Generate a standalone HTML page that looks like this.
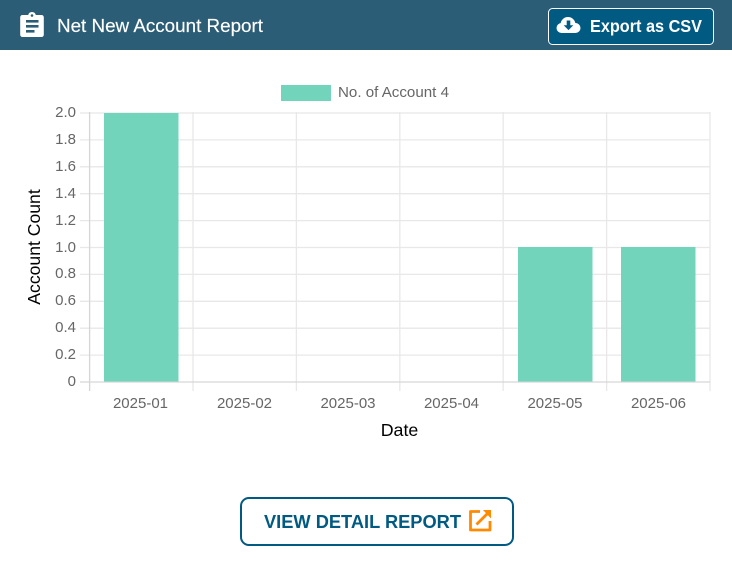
<!DOCTYPE html>
<html>
<head>
<meta charset="utf-8">
<style>
html,body{margin:0;padding:0;width:732px;height:563px;overflow:hidden;background:#fff}
svg{display:block;position:absolute;left:0;top:0}
text{font-family:"Liberation Sans",sans-serif}
</style>
</head>
<body>
<svg width="732" height="563" viewBox="0 0 732 563" xmlns="http://www.w3.org/2000/svg">
<rect x="0" y="0" width="732" height="50" fill="#2b5d76"/>
<!-- clipboard icon -->
<path d="M22.500 15h5.700a3.900 3.900 0 0 1 7.600 0h5.700a2.300 2.300 0 0 1 2.300 2.300v17.400a2.300 2.300 0 0 1-2.300 2.300H22.500a2.300 2.300 0 0 1-2.300-2.300V17.300a2.300 2.300 0 0 1 2.300-2.300z" fill="#fff"/>
<circle cx="32" cy="15.500" r="1.300" fill="#2b5d76"/>
<rect x="26" y="20" width="12.500" height="2.600" fill="#2b5d76"/>
<rect x="26" y="25" width="12.500" height="2.600" fill="#2b5d76"/>
<rect x="26" y="30" width="8.500" height="2.600" fill="#2b5d76"/>
<text x="57" y="32" font-size="18.200" fill="#fff" stroke="#fff" stroke-width="0.15" textLength="206" lengthAdjust="spacingAndGlyphs">Net New Account Report</text>
<!-- export button -->
<rect x="548.500" y="8.500" width="165" height="36" rx="4" fill="#005a82" stroke="#fff" stroke-width="1"/>
<g fill="#fff">
<circle cx="568" cy="24.500" r="7.500"/>
<circle cx="561.500" cy="28" r="5"/>
<circle cx="575.500" cy="28" r="5"/>
<rect x="561.500" y="25" width="14" height="8"/>
</g>
<path d="M566.700 20.500h3.600v4.700h3l-4.800 4.900-4.800-4.900h3z" fill="#005a82"/>
<text x="590" y="32" font-size="17.500" font-weight="700" fill="#fff" textLength="112" lengthAdjust="spacingAndGlyphs">Export as CSV</text>
<!-- legend -->
<rect x="281" y="85" width="50" height="16" fill="#72d4bb"/>
<text x="338" y="97" font-size="14.300" fill="#666" textLength="111" lengthAdjust="spacingAndGlyphs">No. of Account 4</text>
<!-- grid -->
<g stroke="#e8e8e8" stroke-width="1.300" fill="none">
<path d="M80 113H710M80 139.900H710M80 166.800H710M80 193.700H710M80 220.600H710M80 247.500H710M80 274.400H710M80 301.300H710M80 328.200H710M80 355.100H710"/>
<path d="M193 112V391M296.400 112V391M399.800 112V391M503.200 112V391M606.600 112V391M710 112V391"/>
</g>
<path d="M80 382H710M89.600 112V391" stroke="#d6d6d6" stroke-width="1.300" fill="none"/>
<!-- bars -->
<rect x="104" y="113" width="74.500" height="268.500" fill="#72d4bb"/>
<rect x="518" y="247" width="74.500" height="134.500" fill="#72d4bb"/>
<rect x="621" y="247" width="74.500" height="134.500" fill="#72d4bb"/>
<!-- y labels -->
<g font-size="15" fill="#666" text-anchor="end">
<text x="76" y="117">2.0</text>
<text x="76" y="144">1.8</text>
<text x="76" y="171">1.6</text>
<text x="76" y="198">1.4</text>
<text x="76" y="225">1.2</text>
<text x="76" y="252">1.0</text>
<text x="76" y="278">0.8</text>
<text x="76" y="305">0.6</text>
<text x="76" y="332">0.4</text>
<text x="76" y="359">0.2</text>
<text x="76" y="386">0</text>
</g>
<!-- x labels -->
<g font-size="15" fill="#666" text-anchor="middle">
<text x="140.500" y="408">2025-01</text>
<text x="244.500" y="408">2025-02</text>
<text x="348" y="408">2025-03</text>
<text x="451.500" y="408">2025-04</text>
<text x="555" y="408">2025-05</text>
<text x="658.500" y="408">2025-06</text>
</g>
<text x="399.500" y="436" font-size="17.800" fill="#000" text-anchor="middle">Date</text>
<text transform="translate(40 247) rotate(-90)" font-size="17.600" fill="#000" text-anchor="middle">Account Count</text>
<!-- bottom button -->
<rect x="241" y="498" width="272" height="47" rx="8" fill="#fff" stroke="#005a82" stroke-width="2"/>
<text x="264" y="528" font-size="18.500" font-weight="700" fill="#005a82" textLength="197" lengthAdjust="spacingAndGlyphs">VIEW DETAIL REPORT</text>
<path d="M480 511.500H470.500V530H490V521" fill="none" stroke="#ff8a00" stroke-width="2.800" stroke-linejoin="round"/>
<path d="M476.500 524.500L489 512" fill="none" stroke="#ff8a00" stroke-width="2.800"/>
<path d="M483 510H491V518.500z" fill="#ff8a00"/>
</svg>
</body>
</html>
